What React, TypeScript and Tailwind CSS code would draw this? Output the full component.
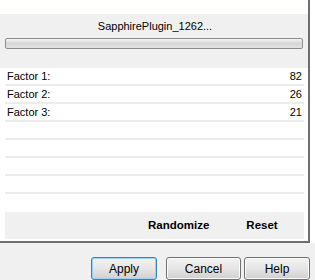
const rows: { label: string; value: string }[] = [
  { label: 'Factor 1:', value: '82' },
  { label: 'Factor 2:', value: '26' },
  { label: 'Factor 3:', value: '21' },
  { label: '', value: '' },
  { label: '', value: '' },
  { label: '', value: '' },
  { label: '', value: '' },
];

function DialogButton({ label, primary = false, className = '' }: { label: string; primary?: boolean; className?: string }) {
  return (
    <button
      className={`h-[23px] rounded-[3px] border text-[12px] text-black bg-gradient-to-b from-[#f3f3f3] via-[#e6e6e6] to-[#cfcfcf] ${
        primary ? 'border-[#3c7fb1] shadow-[inset_0_0_0_1px_#9fd3f5]' : 'border-[#707070] shadow-[inset_0_0_0_1px_#fbfbfb]'
      } ${className}`}
    >
      {label}
    </button>
  );
}

export default function App() {
  return (
    <div className="w-[315px] h-[280px] overflow-hidden bg-white font-['Liberation_Sans',Arial,sans-serif] text-[11px] text-black">
      <div className="w-[310px] h-[243px] flex flex-col border-r-2 border-b-2 border-[#6e6e6e] bg-white">
        <div className="h-[14px] bg-[#fffffd]" />
        <div className="h-[54px] bg-[#f0f0f0] pl-[2px] flex flex-col">
          <p className="h-[24px] pt-[6px] text-center leading-[13px]">SapphirePlugin_1262...</p>
          <div className="ml-[3px] w-[298px] h-[11px] rounded-[2px] border border-[#8c8c8c] bg-gradient-to-b from-[#f4f4f4] via-[#d6d6d6] to-[#e2e2e2]" />
        </div>
        <div className="h-[144px] flex flex-col pr-[4px]">
          {rows.map((row, i) => (
            <div key={i} className="h-[18px] flex flex-col">
              <div className="h-[16px] flex items-center justify-between pl-[7px] pr-[2px]">
                <span>{row.label}</span>
                <span>{row.value}</span>
              </div>
              <div className="h-[2px] ml-[5px] bg-[#ececec]" />
            </div>
          ))}
          <div className="h-[18px]" />
        </div>
        <div className="h-[27px] ml-[5px] mr-[4px] bg-[#f0f0f0] flex items-center font-bold text-[11.5px]">
          <span className="ml-[143px]">Randomize</span>
          <span className="ml-[37px]">Reset</span>
        </div>
      </div>
      <div className="h-[37px] bg-[#f0f0f0] flex items-start pt-[14px]">
        <DialogButton label="Apply" primary className="ml-[91px] w-[66px]" />
        <DialogButton label="Cancel" className="ml-[9px] w-[75px]" />
        <DialogButton label="Help" className="ml-[3px] w-[66px]" />
      </div>
    </div>
  );
}
